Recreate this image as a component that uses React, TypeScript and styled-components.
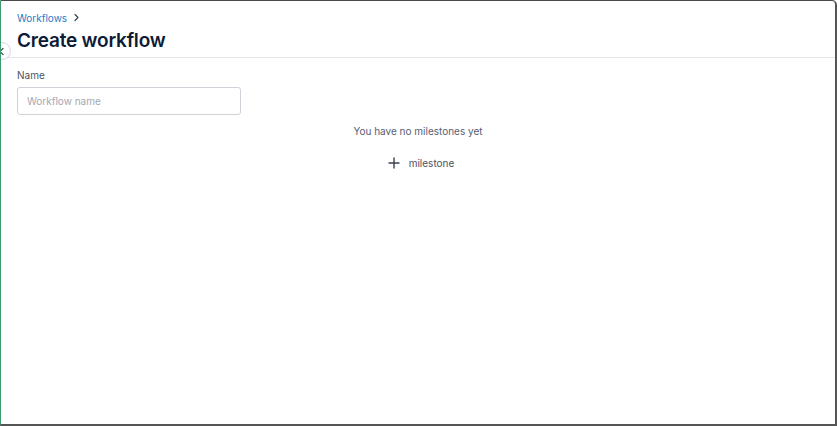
import React from 'react';
import styled, { createGlobalStyle } from 'styled-components';

const GlobalStyle = createGlobalStyle`
  html, body {
    margin: 0;
    padding: 0;
    background: #ffffff;
  }
  body {
    font-family: Inter, "Noto Sans", sans-serif;
    -webkit-font-smoothing: antialiased;
  }
  * {
    box-sizing: border-box;
  }
`;

const Frame = styled.div`
  position: relative;
  width: 837px;
  height: 426px;
  background: #ffffff;
  border-top: 1px solid #4a4a4a;
  border-right: 2px solid #555555;
  border-bottom: 2px solid #555555;
  border-left: 1px solid #3d9a6c;
  border-top-right-radius: 5px;
  overflow: hidden;
`;

const Header = styled.header`
  padding: 9px 16px 0;
  border-bottom: 1px solid #e3e5ea;
  height: 57px;
`;

const Breadcrumb = styled.nav`
  display: flex;
  align-items: center;
  gap: 6px;
  height: 15px;
  font-size: 10px;
`;

const CrumbLink = styled.a`
  color: #1f7cc7;
  text-decoration: none;
  cursor: pointer;
`;

const Title = styled.h1`
  margin: 3px 0 0;
  font-size: 19px;
  font-weight: 600;
  letter-spacing: -0.2px;
  line-height: 25px;
  color: #0d1b36;
`;

const CollapseButton = styled.button`
  position: absolute;
  left: -8px;
  top: 41px;
  width: 18px;
  height: 18px;
  border-radius: 50%;
  border: 1px solid #d3d8e1;
  background: #ffffff;
  padding: 0 0 0 4px;
  display: flex;
  align-items: center;
  color: #3a4252;
  cursor: pointer;
`;

const Body = styled.main`
  padding: 10px 16px 0;
`;

const Field = styled.div`
  display: flex;
  flex-direction: column;
  gap: 5px;
  width: 224px;
`;

const Label = styled.label`
  font-size: 10px;
  color: #4b5262;
  line-height: 14px;
`;

const Input = styled.input`
  width: 224px;
  height: 28px;
  border: 1px solid #cfd2d8;
  border-radius: 3px;
  padding: 0 9px;
  font-family: inherit;
  font-size: 10px;
  color: #1b2333;
  outline: none;

  &::placeholder {
    color: #a3a8b3;
  }
`;

const Empty = styled.section`
  display: flex;
  flex-direction: column;
  align-items: center;
  gap: 18px;
  margin-top: 9px;
`;

const EmptyText = styled.p`
  margin: 0;
  font-size: 10px;
  line-height: 14px;
  color: #586073;
`;

const AddButton = styled.button`
  display: flex;
  align-items: center;
  gap: 9px;
  height: 14px;
  background: transparent;
  border: none;
  padding: 0;
  font-family: inherit;
  font-size: 10px;
  color: #4b5262;
  cursor: pointer;
  margin-left: 6px;
`;

export default function App() {
  return (
    <>
      <GlobalStyle />
      <Frame>
        <Header>
          <Breadcrumb>
            <CrumbLink>Workflows</CrumbLink>
            <svg width="7" height="9" viewBox="0 0 7 9" fill="none">
              <path d="M2 1.5 L5 4.5 L2 7.5" stroke="#3a4252" strokeWidth="1.2" strokeLinecap="round" strokeLinejoin="round" />
            </svg>
          </Breadcrumb>
          <Title>Create workflow</Title>
        </Header>
        <CollapseButton aria-label="Collapse">
          <svg width="7" height="9" viewBox="0 0 7 9" fill="none">
            <path d="M5 1.5 L2 4.5 L5 7.5" stroke="#3a4252" strokeWidth="1.2" strokeLinecap="round" strokeLinejoin="round" />
          </svg>
        </CollapseButton>
        <Body>
          <Field>
            <Label htmlFor="wf-name">Name</Label>
            <Input id="wf-name" placeholder="Workflow name" />
          </Field>
          <Empty>
            <EmptyText>You have no milestones yet</EmptyText>
            <AddButton>
              <svg width="12" height="12" viewBox="0 0 12 12" fill="none">
                <path d="M6 1 V11 M1 6 H11" stroke="#3a4252" strokeWidth="1.4" strokeLinecap="round" />
              </svg>
              milestone
            </AddButton>
          </Empty>
        </Body>
      </Frame>
    </>
  );
}
